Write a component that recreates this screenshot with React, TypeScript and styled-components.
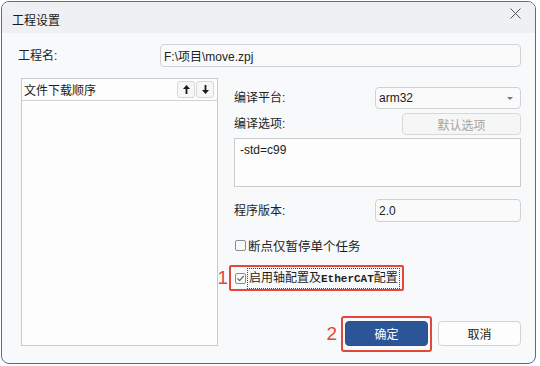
import React from 'react'
import styled, { createGlobalStyle, css } from 'styled-components'

const GlobalStyle = createGlobalStyle`
  html, body {
    margin: 0;
    padding: 0;
    background: #fff;
  }
  body {
    font-family: 'Liberation Sans', 'Noto Sans CJK SC', sans-serif;
    font-size: 12px;
    color: #222;
  }
`

const RED = '#e2483a'

const Window = styled.div`
  box-sizing: border-box;
  width: 535px;
  height: 363px;
  margin: 1px 0 0 1px;
  border: 1px solid #3a72b6;
  border-radius: 8px;
  overflow: hidden;
  background: #f8f9fa;
  display: flex;
  flex-direction: column;
`

const TitleBar = styled.div`
  height: 31px;
  box-sizing: border-box;
  padding: 6px 14px 0 10px;
  background: #eef0f3;
  display: flex;
  align-items: flex-start;
  justify-content: space-between;
`

const Title = styled.div`
  margin-top: 5px;
  line-height: 16px;
  font-size: 12px;
  color: #1a1a1a;
`

const Body = styled.div`
  flex: 1;
  display: flex;
  flex-direction: column;
  padding: 11px 14px 17px 16px;
`

const NameRow = styled.div`
  display: grid;
  grid-template-columns: 142px 1fr;
  align-items: center;
`

const Label = styled.div`
  line-height: 16px;
  color: #222;
  white-space: nowrap;
`

const Field = styled.div<{ $h?: number }>`
  box-sizing: border-box;
  height: ${(p) => p.$h ?? 23}px;
  padding: 0 3px;
  border: 1px solid #cfd1d4;
  border-radius: 4px;
  background: #fafafa;
  display: flex;
  align-items: center;
  color: #222;
  position: relative;
`

const Main = styled.div`
  flex: 1;
  margin-top: 11px;
  display: grid;
  grid-template-columns: 197px 1fr;
  column-gap: 16px;
  margin-left: 3px;
`

const ListBox = styled.div`
  border: 1px solid #c9c9c9;
  background: #fdfdfd;
  display: flex;
  flex-direction: column;
`

const ListHeader = styled.div`
  height: 21px;
  border-bottom: 1px solid #d2d2d2;
  display: flex;
  align-items: center;
  justify-content: space-between;
  padding: 0 3px 0 2px;
`

const ArrowGroup = styled.div`
  display: flex;
  gap: 1px;
`

const ArrowButton = styled.div`
  box-sizing: border-box;
  width: 18px;
  height: 17px;
  border: 1px solid #d8d8d8;
  border-radius: 3px;
  background: #f7f7f7;
  display: flex;
  align-items: center;
  justify-content: center;
`

const RightColumn = styled.div`
  display: flex;
  flex-direction: column;
  padding-top: 9px;
`

const FormRow = styled.div<{ $mt?: number }>`
  display: grid;
  grid-template-columns: 141px 1fr;
  align-items: center;
  margin-top: ${(p) => p.$mt ?? 0}px;
`

const DefaultButton = styled.div`
  box-sizing: border-box;
  justify-self: end;
  width: 119px;
  height: 22px;
  border: 1px solid #d9d9d9;
  border-radius: 4px;
  background: #f6f6f6;
  color: #a3a3a3;
  display: flex;
  align-items: center;
  justify-content: center;
`

const TextArea = styled.div`
  box-sizing: border-box;
  margin-top: 3px;
  height: 49px;
  padding: 4px 5px;
  border: 1px solid #cbcbcb;
  background: #fdfdfd;
  line-height: 14px;
`

const DropArrow = styled.div`
  position: absolute;
  right: 7px;
  top: 9px;
  width: 0;
  height: 0;
  border-left: 3px solid transparent;
  border-right: 3px solid transparent;
  border-top: 3px solid #777;
`

const CheckRow = styled.div<{ $mt: number; $h: number; $marked?: boolean }>`
  position: relative;
  align-self: flex-start;
  display: flex;
  align-items: center;
  gap: 2px;
  height: ${(p) => p.$h}px;
  margin-top: ${(p) => p.$mt}px;
  padding-left: 1px;
  font-size: 12.5px;
  color: #1e1e1e;
  ${(p) =>
    p.$marked &&
    css`
      font-size: 12px;
      &::after {
        content: '';
        position: absolute;
        left: -5px;
        right: -5px;
        top: -4px;
        bottom: -4px;
        border: 2px solid ${RED};
        border-radius: 2px;
        box-sizing: border-box;
      }
    `}
`

const Box = styled.div`
  box-sizing: border-box;
  width: 11px;
  height: 11px;
  border: 1px solid #8c8c8c;
  border-radius: 2px;
  background: #fafafa;
  display: flex;
  align-items: center;
  justify-content: center;
`

const FocusText = styled.span`
  outline: 1px dotted #444;
  outline-offset: 0;
  padding: 0 1px;
  line-height: 18px;
`

const Mono = styled.span`
  font-family: 'Liberation Mono', monospace;
  font-size: 11px;
  font-weight: bold;
`

const Marker = styled.span<{ $right: number }>`
  position: absolute;
  right: calc(100% + ${(p) => p.$right}px);
  top: 50%;
  transform: translateY(-50%);
  color: ${RED};
  font-family: 'Liberation Sans', sans-serif;
  font-size: 19px;
  line-height: 20px;
`

const ButtonRow = styled.div`
  margin-top: auto;
  display: flex;
  justify-content: flex-end;
  gap: 10px;
`

const ConfirmWrap = styled.div`
  position: relative;
  &::after {
    content: '';
    position: absolute;
    left: -4px;
    right: -4px;
    top: -5px;
    bottom: -6px;
    border: 2px solid ${RED};
    border-radius: 3px;
  }
`

const DialogButton = styled.div<{ $primary?: boolean }>`
  box-sizing: border-box;
  width: 83px;
  height: 25px;
  border-radius: 4px;
  display: flex;
  align-items: center;
  justify-content: center;
  ${(p) =>
    p.$primary
      ? css`
          background: #2c5597;
          border: 1px solid #2a4f8c;
          color: #fff;
        `
      : css`
          background: #fdfdfd;
          border: 1px solid #d3d3d3;
          color: #222;
        `}
`

const Arrow = ({ down }: { down?: boolean }) => (
  <svg width='7' height='9' viewBox='0 0 7 9' style={down ? { transform: 'rotate(180deg)' } : undefined}>
    <path d='M3.5 0 L7 4 H4.4 V9 H2.6 V4 H0 Z' fill='#1a1a1a' />
  </svg>
)

const App = () => (
  <>
    <GlobalStyle />
    <Window>
      <TitleBar>
        <Title>工程设置</Title>
        <svg width='11' height='11' viewBox='0 0 11 11'>
          <path d='M0.5 0.5 L10.5 10.5 M10.5 0.5 L0.5 10.5' stroke='#555' strokeWidth='1' />
        </svg>
      </TitleBar>
      <Body>
        <NameRow>
          <Label>工程名:</Label>
          <Field>F:\项目\move.zpj</Field>
        </NameRow>
        <Main>
          <ListBox>
            <ListHeader>
              <span>文件下载顺序</span>
              <ArrowGroup>
                <ArrowButton>
                  <Arrow />
                </ArrowButton>
                <ArrowButton>
                  <Arrow down />
                </ArrowButton>
              </ArrowGroup>
            </ListHeader>
          </ListBox>
          <RightColumn>
            <FormRow>
              <Label>编译平台:</Label>
              <Field $h={22}>
                arm32
                <DropArrow />
              </Field>
            </FormRow>
            <FormRow $mt={4}>
              <Label>编译选项:</Label>
              <DefaultButton>默认选项</DefaultButton>
            </FormRow>
            <TextArea>-std=c99</TextArea>
            <FormRow $mt={12}>
              <Label>程序版本:</Label>
              <Field>2.0</Field>
            </FormRow>
            <CheckRow $mt={15} $h={16}>
              <Box />
              <span>断点仅暂停单个任务</span>
            </CheckRow>
            <CheckRow $mt={16} $h={18} $marked>
              <Marker $right={6}>1</Marker>
              <Box>
                <svg width='9' height='9' viewBox='0 0 9 9'>
                  <path d='M1.5 4.5 L3.6 6.6 L7.6 2' stroke='#6a6a6a' strokeWidth='1.3' fill='none' />
                </svg>
              </Box>
              <FocusText>
                启用轴配置及<Mono>EtherCAT</Mono>配置
              </FocusText>
            </CheckRow>
            <ButtonRow>
              <ConfirmWrap>
                <Marker $right={8}>2</Marker>
                <DialogButton $primary>确定</DialogButton>
              </ConfirmWrap>
              <DialogButton>取消</DialogButton>
            </ButtonRow>
          </RightColumn>
        </Main>
      </Body>
    </Window>
  </>
)

export default App
